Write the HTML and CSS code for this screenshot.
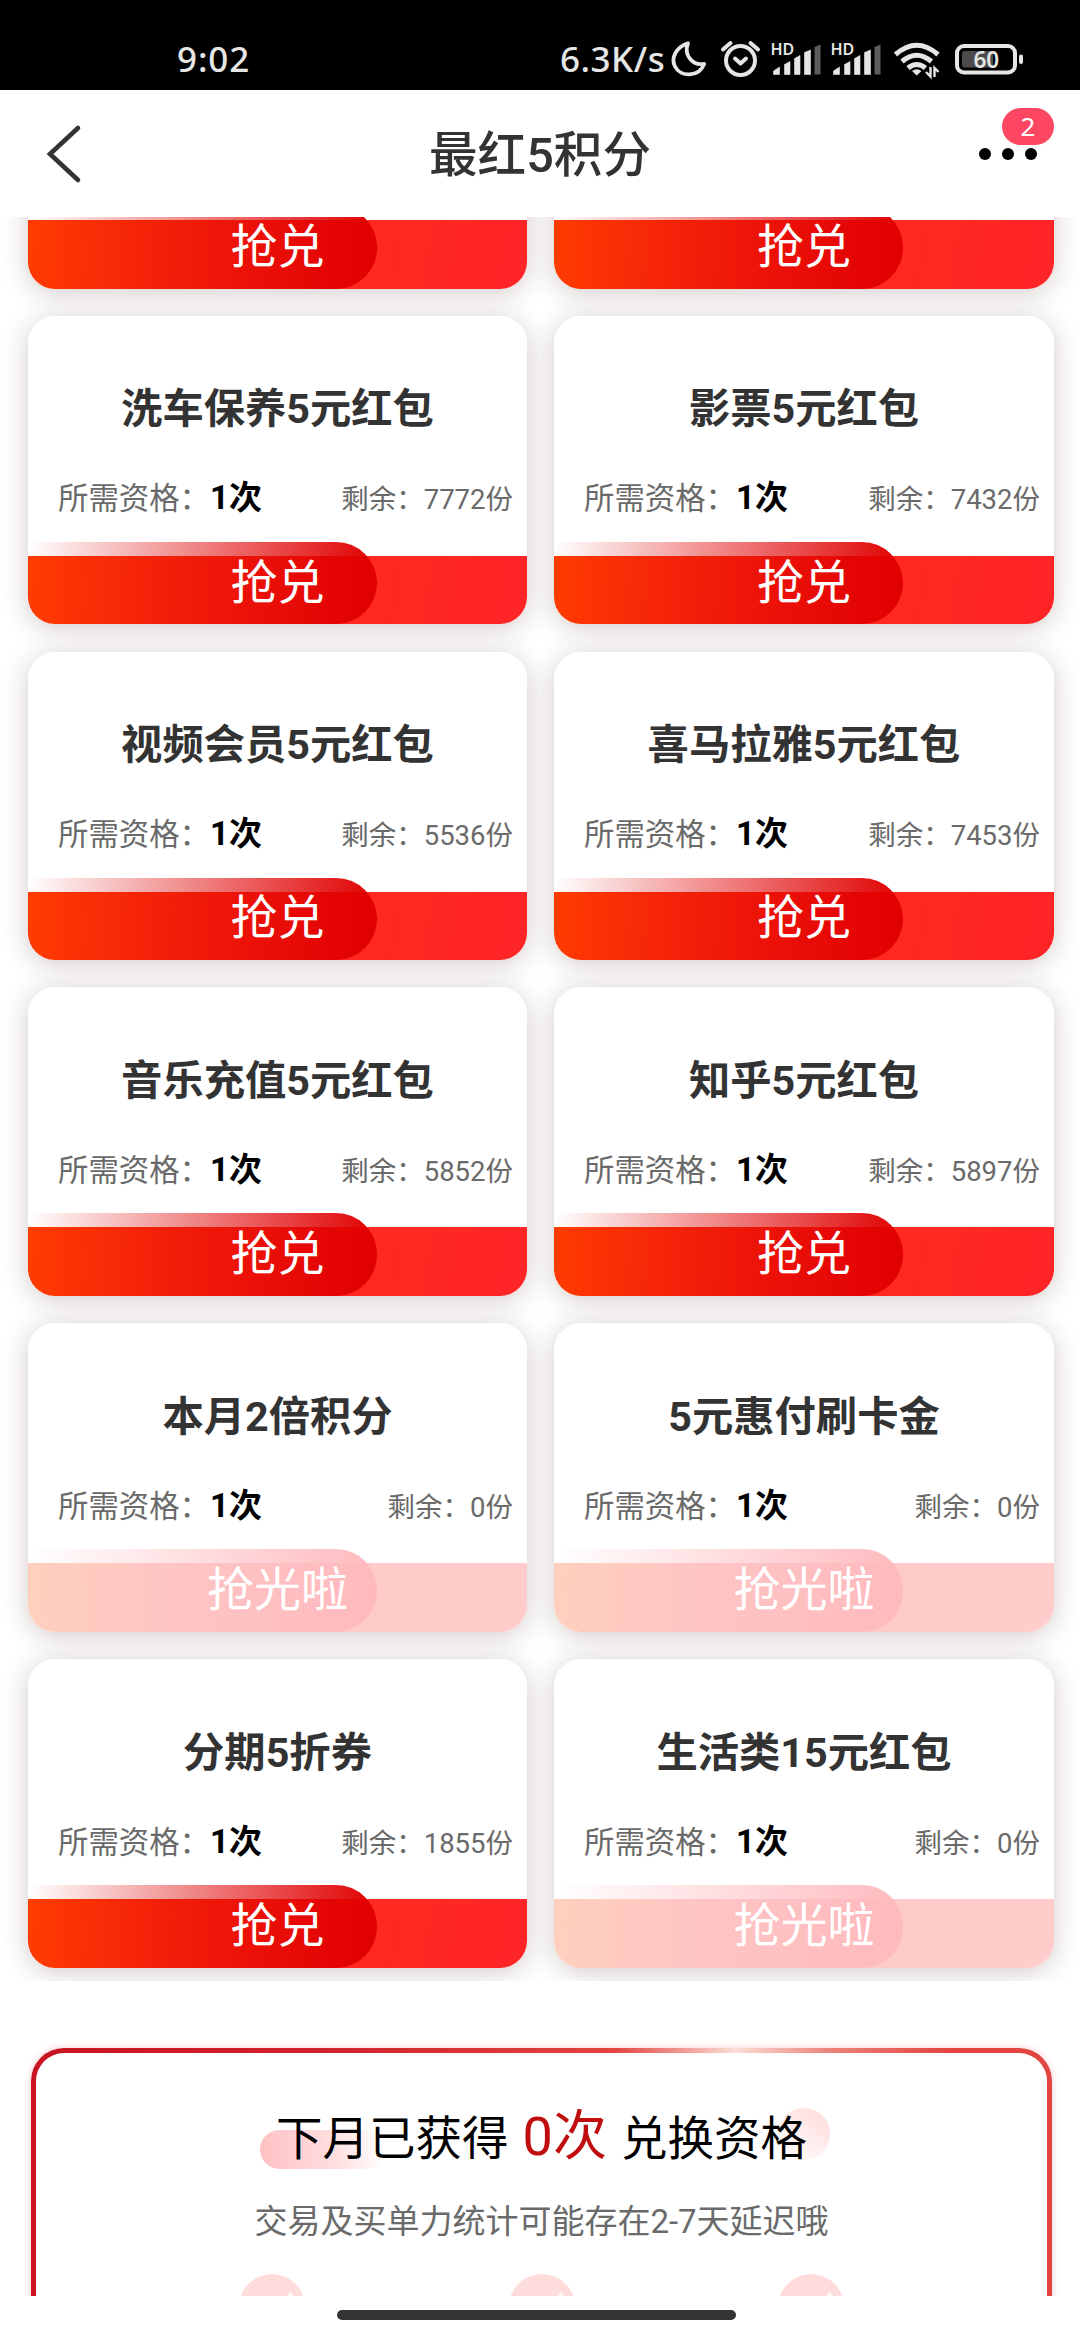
FILE: index.html
```html
<!DOCTYPE html>
<html lang="zh-CN">
<head>
<meta charset="utf-8">
<title>最红5积分</title>
<link rel="stylesheet" href="styles.css">
</head>
<body>
<div class="status">
  <span class="clock">9:02</span>
  <span class="speed">6.3K/s</span>
  <svg class="status-icons" width="360" height="50" viewBox="668 35 360 50" fill="none">
    <path d="M688 43.200C676.500 47 670.500 57.500 675 66.500C680.500 77.500 699 77.500 704.200 63.800C693.500 66 683 55.500 688 43.200Z" stroke="#e6e6e6" stroke-width="3.800" stroke-linejoin="round"/>
    <g stroke="#e6e6e6" stroke-width="4" stroke-linecap="round" stroke-linejoin="round">
      <circle cx="740.500" cy="60.500" r="14.500"/>
      <path d="M735 58.500L740.500 63.500L746 58.500M723 49.500L730.500 43M758 49.500L750.500 43"/>
    </g>
    <g id="signal">
      <text x="770.500" y="55" class="hd">HD</text>
      <g fill="#e6e6e6">
        <path d="M773.500 74.500V71L779.500 67V74.500ZM784.500 74.500V64.500L790 61.500V74.500ZM794.500 74.500V58.500L800 55.500V74.500ZM804.500 74.500V52.500L810.500 50V74.500Z" stroke="#e6e6e6" stroke-width=".6" stroke-linejoin="round"/>
        <path d="M814.500 74.500V47L820.500 44.500V74.500Z" fill="#5c5c5c"/>
      </g>
    </g>
    <use href="#signal" x="60"/>
    <g stroke="#e6e6e6" stroke-width="5">
      <path d="M895.500 54.500Q916.700 36 938 54.500M902 61.500Q916.700 49 931.500 61.500M908 68Q916.700 61 925.500 68"/>
      <path d="M912 71Q916.700 67.500 921.500 71L916.700 75.500Z" fill="#e6e6e6" stroke="none"/>
      <path d="M930.500 67V76.500L926 72M934.500 77V68L938.500 72" stroke-width="2.400"/>
    </g>
    <rect x="957" y="46" width="58" height="26.500" rx="7" stroke="#e6e6e6" stroke-width="4"/>
    <rect x="962" y="51" width="31" height="16.500" rx="3" fill="#4c4c4c"/>
    <rect x="1019" y="54.500" width="4" height="9.500" rx="2" fill="#e6e6e6"/>
    <text x="973.500" y="67.500" class="level">60</text>
  </svg>
</div>

<header class="nav">
  <svg class="back" width="40" height="60" viewBox="0 0 40 60"><path d="M33 4L5 30L33 56" fill="none" stroke="#333" stroke-width="4.600" stroke-linecap="round"/></svg>
  <h1>最红5积分</h1>
  <div class="more"><i></i><i></i><i></i><b class="badge">2</b></div>
</header>

<main class="page">
  <section class="coupons">
    <article class="card cut"><button class="grab"><span>抢兑</span></button></article>
    <article class="card cut"><button class="grab"><span>抢兑</span></button></article>

    <article class="card"><h2>洗车保养5元红包</h2><p><span>所需资格：<b>1次</b></span><small>剩余：7772份</small></p><button class="grab"><span>抢兑</span></button></article>
    <article class="card"><h2>影票5元红包</h2><p><span>所需资格：<b>1次</b></span><small>剩余：7432份</small></p><button class="grab"><span>抢兑</span></button></article>

    <article class="card"><h2>视频会员5元红包</h2><p><span>所需资格：<b>1次</b></span><small>剩余：5536份</small></p><button class="grab"><span>抢兑</span></button></article>
    <article class="card"><h2>喜马拉雅5元红包</h2><p><span>所需资格：<b>1次</b></span><small>剩余：7453份</small></p><button class="grab"><span>抢兑</span></button></article>

    <article class="card"><h2>音乐充值5元红包</h2><p><span>所需资格：<b>1次</b></span><small>剩余：5852份</small></p><button class="grab"><span>抢兑</span></button></article>
    <article class="card"><h2>知乎5元红包</h2><p><span>所需资格：<b>1次</b></span><small>剩余：5897份</small></p><button class="grab"><span>抢兑</span></button></article>

    <article class="card"><h2>本月2倍积分</h2><p><span>所需资格：<b>1次</b></span><small>剩余：0份</small></p><button class="grab gone"><span>抢光啦</span></button></article>
    <article class="card"><h2>5元惠付刷卡金</h2><p><span>所需资格：<b>1次</b></span><small>剩余：0份</small></p><button class="grab gone"><span>抢光啦</span></button></article>

    <article class="card"><h2>分期5折券</h2><p><span>所需资格：<b>1次</b></span><small>剩余：1855份</small></p><button class="grab"><span>抢兑</span></button></article>
    <article class="card"><h2>生活类15元红包</h2><p><span>所需资格：<b>1次</b></span><small>剩余：0份</small></p><button class="grab gone"><span>抢光啦</span></button></article>
  </section>

  <section class="quota">
    <div class="headline"><span>下月已获得</span><em>0次</em><span>兑换资格</span></div>
    <p class="note">交易及买单力统计可能存在2-7天延迟哦</p>
    <div class="steps">
      <svg width="68" height="68" viewBox="0 0 68 68"><circle cx="34" cy="34" r="33" fill="#ffdcdc"/><path d="M49 23L53 18L56 23Z" fill="#fff6ee"/></svg>
      <svg width="68" height="68" viewBox="0 0 68 68"><circle cx="34" cy="34" r="33" fill="#ffdcdc"/><path d="M49 23L53 18L56 23Z" fill="#fff6ee"/></svg>
      <svg width="68" height="68" viewBox="0 0 68 68"><circle cx="34" cy="34" r="33" fill="#ffdcdc"/><path d="M49 23L53 18L56 23Z" fill="#fff6ee"/></svg>
    </div>
  </section>
</main>
<footer class="home"><i></i></footer>
</body>
</html>
```
FILE: styles.css
```css
* { box-sizing: border-box; margin: 0; padding: 0; }
body {
  width: 1080px; height: 2340px; overflow: hidden;
  display: flex; flex-direction: column;
  background: #fff;
  font-family: Roboto, "Noto Sans CJK SC", sans-serif;
}
i, em { font-style: normal; }

.status {
  height: 90px; flex: none; background: #000; color: #e6e6e6;
  display: flex; align-items: center; padding: 28px 52px 0 177px;
  font: 500 35px/50px "Noto Sans", sans-serif;
}
.clock { flex: 1; letter-spacing: .9px; }
.speed { width: 108px; white-space: nowrap; letter-spacing: .5px; }
.status-icons { flex: none; margin-top: 2px; }
.hd { font: 600 16px "Noto Sans", sans-serif; fill: #e6e6e6; }
.level { font: 600 22.500px "Noto Sans", sans-serif; fill: #e6e6e6; }

.nav {
  height: 127px; flex: none; background: #fff;
  display: grid; grid-template-columns: 120px 1fr 120px; align-items: center;
}
.back { margin-left: 45px; }
.nav h1 { text-align: center; font-size: 48.600px; font-weight: 500; line-height: 60px; color: #333; padding-top: 5px; }
.more { position: relative; display: flex; gap: 11px; padding-left: 19px; }
.more i { width: 12px; height: 12px; border-radius: 50%; background: #000; }
.badge {
  position: absolute; left: 42px; top: -40px; width: 52px; height: 37px; border-radius: 19px;
  background: #fd4661; color: #fff; text-align: center;
  font: 400 26px/37px "Noto Sans", sans-serif;
}

.page { flex: none; height: 2079px; overflow: hidden; }
.coupons {
  height: 1764px; overflow: hidden; isolation: isolate; padding: 3px 26px 0 28px;
  display: grid; grid-template-columns: 499px 500px; column-gap: 27px; row-gap: 27.300px;
  grid-auto-rows: 308.500px; grid-template-rows: 68.600px; align-content: start;
}
.card { position: relative; border-radius: 27px; background: #fff; display: flex; flex-direction: column; }
.card::before {
  content: ""; position: absolute; inset: 0; z-index: -1; border-radius: 27px;
  box-shadow: 0 4px 27px rgba(75, 35, 35, .24);
}
.card.cut { border-radius: 0 0 27px 27px; }
.card.cut::before { top: -60px; }
.card h2 { margin-top: 63.500px; text-align: center; font-size: 41.300px; line-height: 60px; font-weight: 700; color: #333; }
.card p {
  margin-top: 34px; height: 50px; display: flex; align-items: baseline; justify-content: space-between;
  padding: 0 14px 0 30px; font-size: 30.400px; line-height: 50px; color: #6a6a6a; white-space: nowrap;
}
.card p b { font-size: 33px; color: #000; font-weight: 700; }
.card small { font-size: 27.500px; }

.grab {
  position: relative; margin-top: auto; height: 68.500px; border: 0; flex: none;
  border-radius: 0 0 27px 27px;
  background: linear-gradient(100deg, #ff3c00, #ff2a1e 60%, #ff2427);
  font: 400 47px/50px Roboto, "Noto Sans CJK SC", sans-serif; color: #fff;
}
.grab::before {
  content: ""; position: absolute; left: 0; bottom: 0; width: 349px; height: 82.500px;
  border-radius: 0 41px 41px 27px;
  background: linear-gradient(90deg, rgba(220, 0, 10, 0), #e00000);
}
.grab span { position: relative; display: block; margin-top: -15px; }
.grab.gone { background: linear-gradient(100deg, #ffd0bd, #fdcbc8 40%, #ffcbcb); }
.grab.gone::before { background: linear-gradient(90deg, rgba(255, 186, 190, 0), #ffbabe); }

.quota {
  width: 1021px; height: 500px; margin: 67px 0 0 31px; border: 5px solid transparent; border-radius: 33px;
  background:
    linear-gradient(#fff, #fff) padding-box,
    linear-gradient(90deg, #c91322 0, #d0242c 30%, #e2443f 57%, #fbdcd6 69%, #ec857c 78%, #e2443f 90%) border-box;
  box-shadow: 0 0 7px rgba(230, 60, 60, .28);
}
.headline {
  position: relative; isolation: isolate; display: flex; justify-content: center; align-items: baseline; gap: 14px;
  margin-top: 44px; height: 80px; line-height: 80px; font-size: 46.500px; color: #000; white-space: nowrap;
}
.headline em { font-size: 54px; color: #c00d0d; }
.headline::before, .headline::after { content: ""; position: absolute; z-index: -1; }
.headline::before {
  left: 224px; top: 33px; width: 124px; height: 39px; border-radius: 20px;
  background: linear-gradient(80deg, #ffc0c2, #ffdcdd 55%, #fff 98%);
}
.headline::after {
  left: 742px; top: 11px; width: 52px; height: 52px; border-radius: 50%;
  background: linear-gradient(215deg, #ffd9d9, #fff 95%);
}
.note { margin-top: 23px; text-align: center; font-size: 33px; line-height: 44px; color: #6a6a6a; }
.steps { display: flex; justify-content: center; gap: 201.500px; margin-top: 29px; }

.home { flex: 1; background: #fff; display: flex; justify-content: center; padding: 14px 7px 0 0; }
.home i { width: 399px; height: 10px; border-radius: 5px; background: #333; }
```
